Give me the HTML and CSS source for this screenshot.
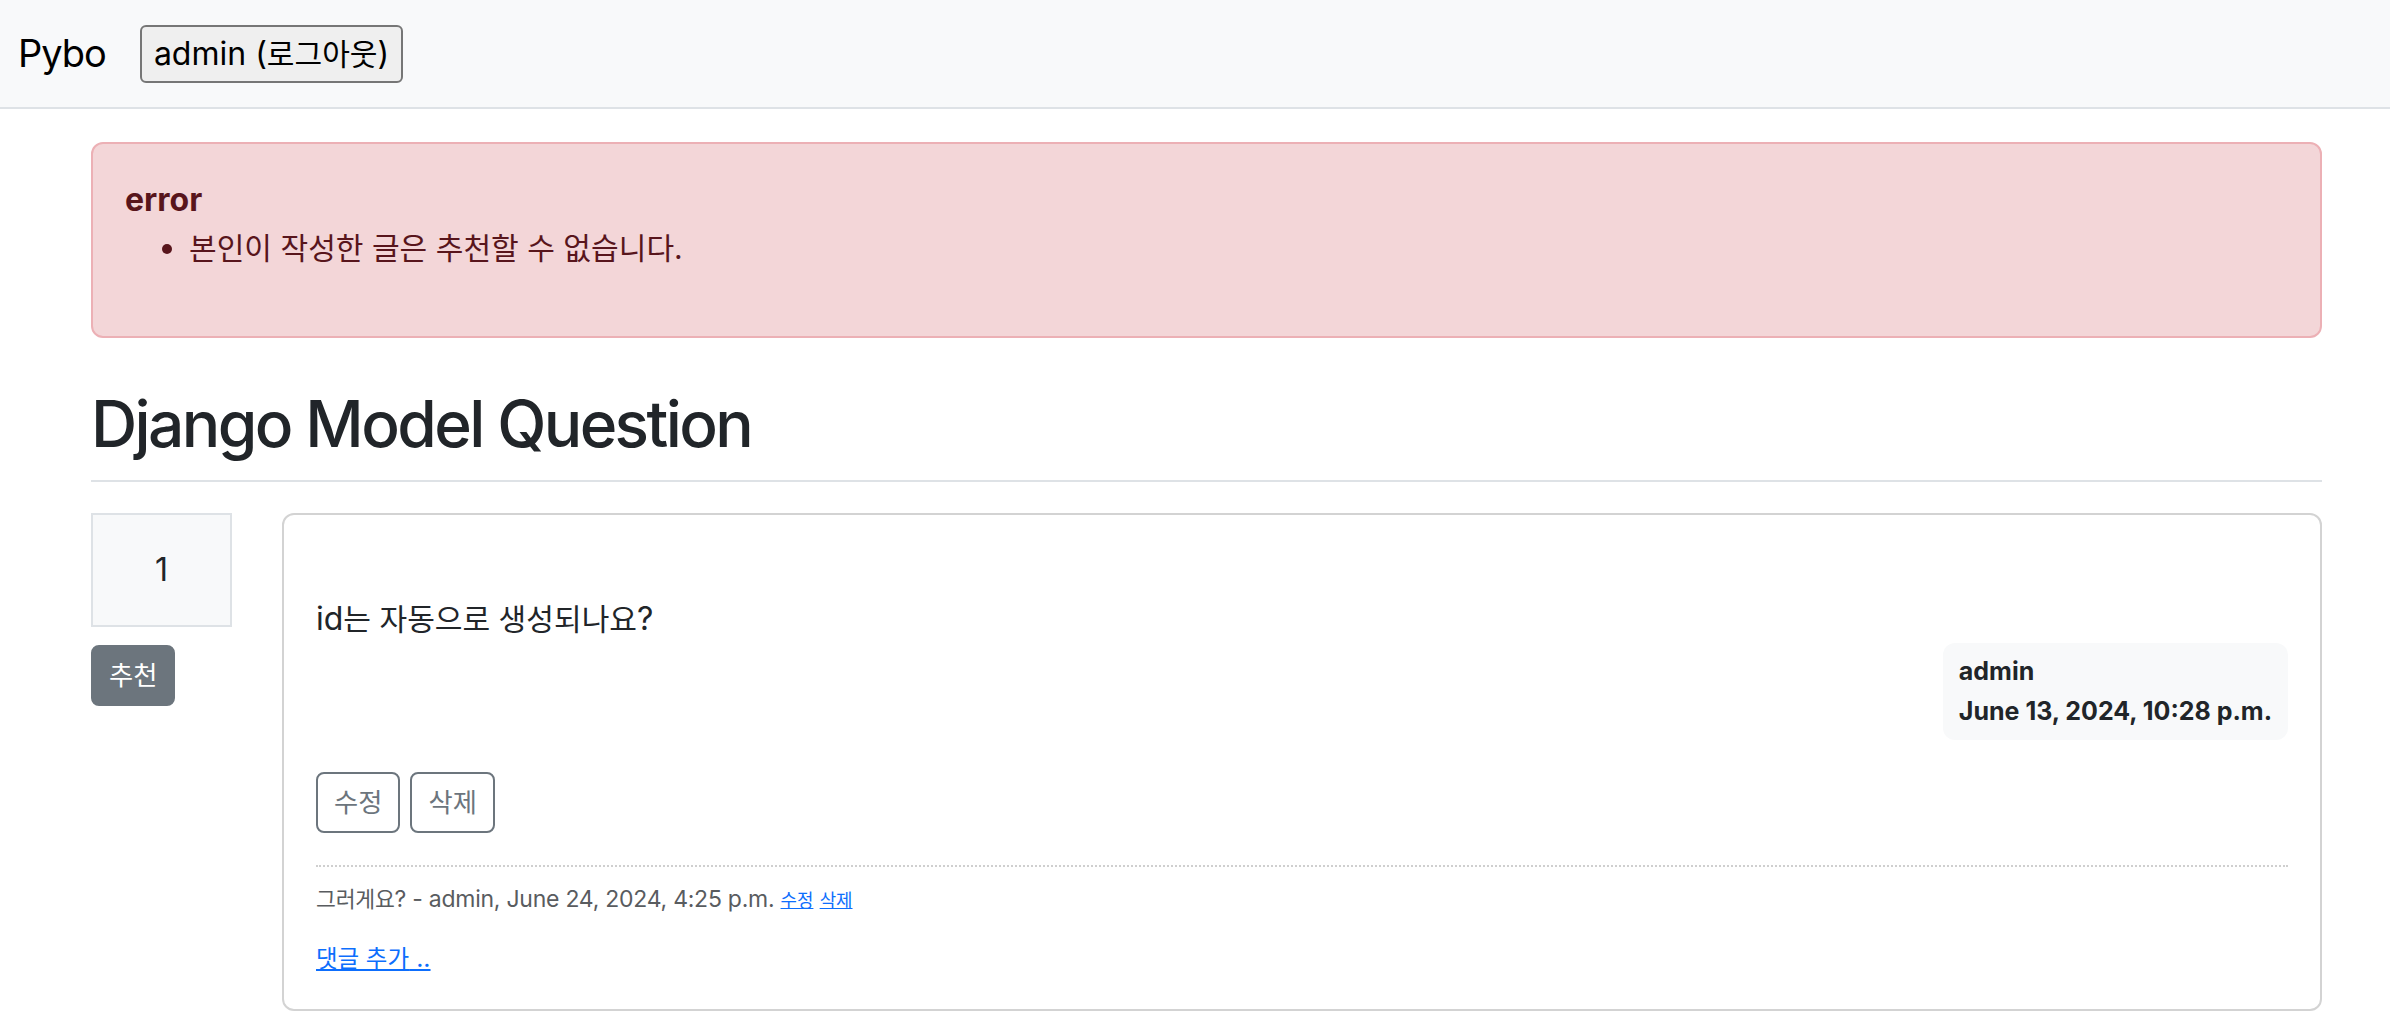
FILE: index.html
```html
<!DOCTYPE html>
<html lang="ko">
<head>
<meta charset="utf-8">
<title>Pybo</title>
<link rel="stylesheet" href="styles.css">
</head>
<body>
<nav class="navbar">
  <a class="brand" href="#">Pybo</a>
  <button class="logout" type="button">admin (<span class="ko">로그아웃</span>)</button>
</nav>
<main class="container">
  <div class="alert">
    <strong class="alert-title">error</strong>
    <ul class="alert-list">
      <li><span class="ko">본인이 작성한 글은 추천할 수 없습니다.</span></li>
    </ul>
  </div>
  <h2 class="subject">Django Model Question</h2>
  <div class="question">
    <div class="vote">
      <div class="vote-count">1</div>
      <a class="btn btn-vote" href="#"><span class="ko">추천</span></a>
    </div>
    <div class="card">
      <div class="card-text">id<span class="ko">는 자동으로 생성되나요</span>?</div>
      <div class="meta-row">
        <div class="badge">
          <div class="badge-author">admin</div>
          <div>June 13, 2024, 10:28 p.m.</div>
        </div>
      </div>
      <div class="actions">
        <a class="btn btn-outline" href="#"><span class="ko">수정</span></a>
        <a class="btn btn-outline" href="#"><span class="ko">삭제</span></a>
      </div>
      <div class="comment">
        <span class="ko">그러게요</span>? - admin, June 24, 2024, 4:25 p.m.
        <a href="#" class="comment-link"><span class="ko">수정</span></a>
        <a href="#" class="comment-link"><span class="ko">삭제</span></a>
      </div>
      <div class="add-comment"><a href="#"><span class="ko">댓글 추가</span> ..</a></div>
    </div>
  </div>
</main>
</body>
</html>
```
FILE: styles.css
```css
* { box-sizing: border-box; }
html, body { margin: 0; }
body {
  font-family: "Inter", "Noto Sans CJK KR", sans-serif;
  font-size: 32px;
  line-height: 1.5;
  color: #212529;
  background: #fff;
}
.ko { font-size: .94em; }

.navbar {
  height: 109px;
  background: #f8f9fa;
  border-bottom: 2px solid #dee2e6;
  display: flex;
  align-items: center;
  padding: 0 18px;
}
.brand {
  font-size: 38px;
  letter-spacing: -1px;
  color: #000;
  text-decoration: none;
  margin-right: 34px;
}
.logout {
  font-family: inherit;
  font-size: 32px;
  line-height: 38px;
  padding: 8px 12px;
  border: 2px solid #767676;
  border-radius: 6px;
  background: #efefef;
  color: #000;
}

.container {
  padding: 33px 68px 0 91px;
}
.alert {
  background: #f3d6d8;
  border: 2px solid #ecb0b5;
  border-radius: 12px;
  padding: 32px;
  color: #58151c;
  margin-bottom: 32px;
}
.alert-title { display: block; font-weight: 700; }
.alert-list { margin: 0 0 32px; padding-left: 64px; }

.subject {
  font-size: 64px;
  font-weight: 500;
  letter-spacing: -2.6px;
  line-height: 1.2;
  margin: 0;
  padding: 16px 0 17px;
  border-bottom: 2px solid #dee2e6;
}

.question {
  display: flex;
  margin-top: 31px;
}
.vote {
  width: 141px;
  margin-right: 50px;
  flex: none;
}
.vote-count {
  background: #f8f9fa;
  border: 2px solid #dee2e6;
  padding: 31px 0;
  text-align: center;
  line-height: 48px;
}
.btn {
  display: inline-block;
  font-size: 28px;
  line-height: 41px;
  padding: 8px 16px;
  border: 2px solid transparent;
  border-radius: 8px;
  text-decoration: none;
}
.btn-vote {
  margin-top: 18px;
  background: #6c757d;
  border-color: #6c757d;
  color: #fff;
}
.btn-outline {
  border-color: #6c757d;
  color: #6c757d;
}

.card {
  flex: 1;
  border: 2px solid #d3d3d3;
  border-radius: 12px;
  padding: 32px;
}
.card-text { padding-top: 48px; }
.meta-row { display: flex; justify-content: flex-end; }
.badge {
  background: #f8f9fa;
  color: #212529;
  border-radius: 12px;
  padding: 16px;
  font-size: 25px;
  font-weight: 700;
  line-height: 1;
}
.badge-author { margin-bottom: 15px; }
.actions {
  display: flex;
  gap: 10px;
  margin: 32px 0;
}
.comment {
  border-top: 2px dotted #cfcfcf;
  padding: 14px 0 16px;
  font-size: 23px;
  letter-spacing: -0.25px;
  line-height: 36px;
  color: #595c5f;
}
.comment-link { font-size: 19px; letter-spacing: 0; color: #0d6efd; }
.add-comment {
  margin-top: 5px;
  font-size: 25px;
  line-height: 36px;
}
.add-comment a { color: #0d6efd; }
```
